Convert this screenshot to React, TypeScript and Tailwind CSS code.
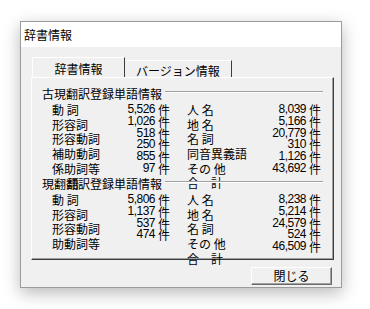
const jp = "font-['Noto_Sans_CJK_JP','Noto_Sans',sans-serif]";
const num = "font-['Liberation_Sans','Noto_Sans_CJK_JP',sans-serif] text-[12px] tracking-[-0.5px]";

type Group = {
  leftLabels: string[];
  leftNums: string[];
  rightLabels: string[];
  rightNums: string[];
};

const kogen: Group = {
  leftLabels: ["動 詞", "形容詞", "形容動詞", "補助動詞", "係助詞等"],
  leftNums: ["5,526", "1,026", "518", "250", "855", "97"],
  rightLabels: ["人 名", "地 名", "名 詞", "同音異義語", "その 他", "合　計"],
  rightNums: ["8,039", "5,166", "20,779", "310", "1,126", "43,692"],
};

const gendai: Group = {
  leftLabels: ["動 詞", "形容詞", "形容動詞", "助動詞等"],
  leftNums: ["5,806", "1,137", "537", "474"],
  rightLabels: ["人 名", "地 名", "名 詞", "その 他", "合　計"],
  rightNums: ["8,238", "5,214", "24,579", "524", "46,509"],
};

function Count({ n }: { n: string }) {
  return (
    <div className="h-[11.8px] flex items-center justify-end whitespace-nowrap leading-[11.8px]">
      <span className={num}>{n}</span>
      <span className="text-[12px] ml-[3px]">件</span>
    </div>
  );
}

function GroupBox({ title, g }: { title: React.ReactNode; g: Group }) {
  return (
    <div className="h-[90px] flex flex-col pr-[10px]">
      <div className="flex items-start h-[12px]">
        <div className="text-[12px] leading-[12px] whitespace-nowrap">{title}</div>
        <div className="flex-1 ml-[3px] mt-[3px] h-[2px] border-t border-t-[#a0a0a0] border-b border-b-white" />
      </div>
      <div className="flex mt-[3px] pl-[10px]">
        <div className="w-[60px] text-[12px] leading-[14.7px] whitespace-nowrap">
          {g.leftLabels.map((l) => (
            <div key={l} className="h-[14.7px]">{l}</div>
          ))}
        </div>
        <div className="w-[58px] pt-[1px]">
          {g.leftNums.map((n) => (
            <Count key={n} n={n} />
          ))}
        </div>
        <div className="ml-[17px] w-[70px] text-[12px] leading-[14.7px] whitespace-nowrap">
          {g.rightLabels.map((l) => (
            <div key={l} className="h-[14.7px]">{l}</div>
          ))}
        </div>
        <div className="w-[64px] pt-[1px]">
          {g.rightNums.map((n) => (
            <Count key={n} n={n} />
          ))}
        </div>
      </div>
    </div>
  );
}

export default function App() {
  return (
    <div className={`w-[370px] h-[309px] bg-white overflow-hidden pt-[21px] pl-[20px] text-[#000] ${jp}`}>
      <div className="w-[322px] h-[267px] border border-[#9b9b9b] bg-white shadow-[0_5px_16px_rgba(0,0,0,0.28)]">
        {/* title bar */}
        <div className="h-[25px] flex items-center pl-[3px] text-[12px] leading-[12px]">辞書情報</div>

        <div className="h-[240px] bg-[#f0f0f0] flex flex-col pl-[10px] pt-[11px]">
          {/* tabs */}
          <div className="flex items-end h-[19px] ml-[1px] text-[12px] leading-[12px]">
            <div className="relative z-10 w-[93px] h-[20px] bg-[#f0f0f0] border-t border-l border-white border-r border-r-[#3c3c3c] rounded-tl-[2px] text-center pt-[5px]">
              辞書情報
            </div>
            <div className="w-[107px] h-[17px] border-t border-white border-r border-r-[#3c3c3c] text-center pt-[4px] whitespace-nowrap">
              バージョン情報
            </div>
          </div>

          {/* panel */}
          <div className="relative w-[303px] h-[183px] bg-[#f0f0f0] border-t border-l border-white border-r border-b border-r-[#3c3c3c] border-b-[#3c3c3c] shadow-[inset_-1px_-1px_#a0a0a0] pt-[10px] pl-[10px]">
            <GroupBox title="古現翻訳登録単語情報" g={kogen} />
            <GroupBox
              title={
                <span className="inline-flex">
                  <span>現</span>
                  <span>翻</span>
                  <span className="relative">
                    翻<span className="absolute left-[1px] top-0">語</span>
                  </span>
                  <span>訳登録単語情報</span>
                </span>
              }
              g={gendai}
            />
          </div>

          {/* button */}
          <div className="flex justify-end pr-[9px] mt-[7px]">
            <button className="w-[81px] h-[18px] bg-[#f0f0f0] border border-t-white border-l-white border-r-[#696969] border-b-[#696969] shadow-[inset_-1px_-1px_#a0a0a0] text-[12px] leading-[12px] flex items-center justify-center">
              閉じる
            </button>
          </div>
        </div>
      </div>
    </div>
  );
}
